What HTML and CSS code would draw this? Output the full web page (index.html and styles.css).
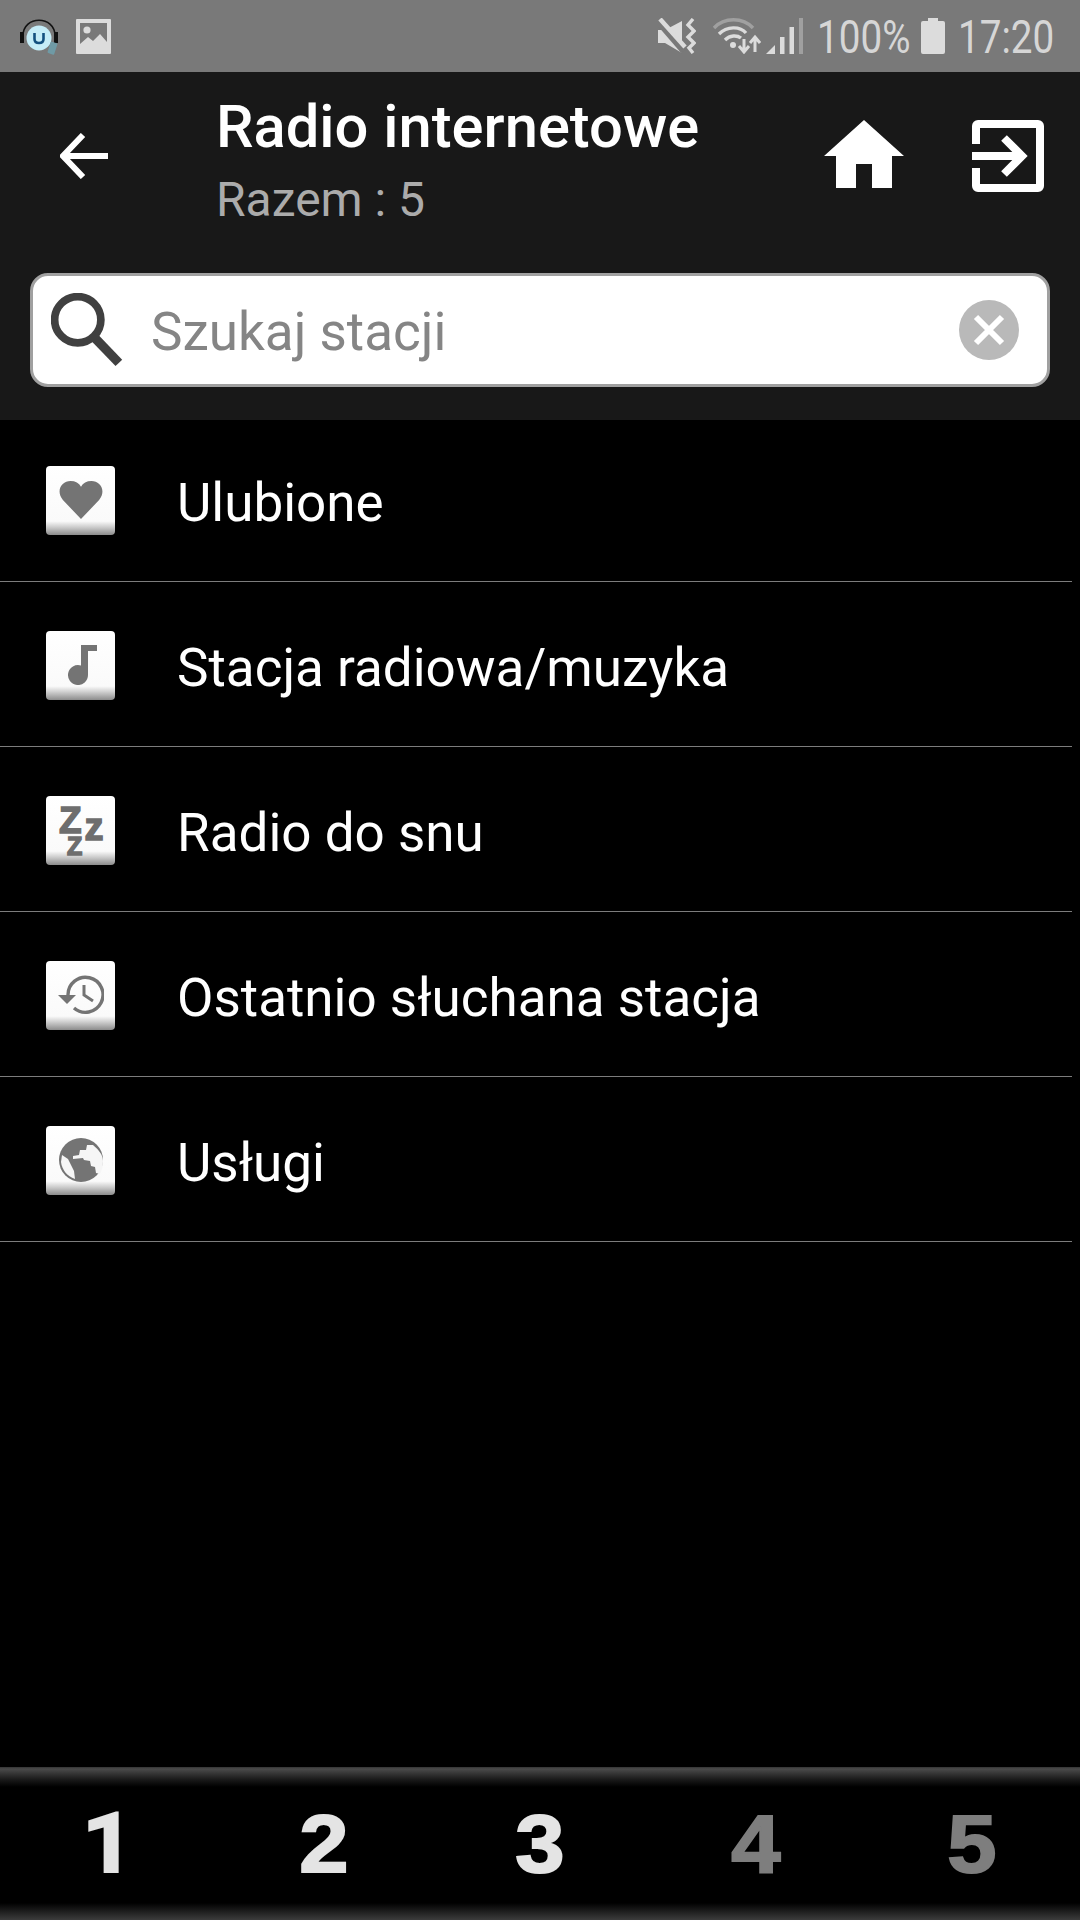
FILE: index.html
```html
<!DOCTYPE html>
<html lang="en">
<head>
    <meta charset="UTF-8">
    <meta name="viewport" content="width=device-width, initial-scale=1.0">
    <link rel="stylesheet" href="styles.css">
    <title>Radio internetowe</title>
</head>
<body>

    <div class="status-bar">
        <svg class="app-icon" width="38" height="38" viewBox="0 0 38 38">
            <path d="M3 19 C3 -2 35 -2 35 19" fill="none" stroke="#111" stroke-width="1.6"/>
            <rect x="0" y="15" width="4" height="11" fill="#111"/>
            <rect x="34" y="15" width="4" height="11" fill="#111"/>
            <circle cx="19" cy="21" r="12.5" fill="#c5ecf7"/>
            <path d="M14.5 16 V22 Q14.5 26 19 26 Q23.5 26 23.5 22 V16" fill="none" stroke="#14507f" stroke-width="2.6"/>
            <rect x="29" y="25" width="7" height="12" rx="1" transform="rotate(18 32 31)" fill="#6f9aa5"/>
        </svg>
        <svg class="image-icon" width="35" height="35" viewBox="0 0 35 35">
            <path fill="#dcdcdc" fill-rule="evenodd" d="M1 0 H34 a1 1 0 0 1 1 1 V34 a1 1 0 0 1 -1 1 H1 a1 1 0 0 1 -1 -1 V1 a1 1 0 0 1 1 -1 Z M4 4 V25 L12 18 L17 22 L24 15 L31 23 V4 Z"/>
            <circle cx="11" cy="11" r="3.6" fill="#dcdcdc"/>
        </svg>
        <div class="status-right">
            <svg class="mute-icon" width="38" height="36" viewBox="0 0 38 36">
                <path fill="#dcdcdc" d="M0 12 H7 L24 3 V35 L7 25 H0 Z"/>
                <path d="M0 3 L26 33" stroke="#797979" stroke-width="7"/>
                <path d="M2 1 L27 29" stroke="#dcdcdc" stroke-width="4.5"/>
                <path d="M35 1 L30 7 L36 13 L30 19 L36 25 L31 30 L35 35" fill="none" stroke="#dcdcdc" stroke-width="3.4"/>
            </svg>
            <svg class="wifi-icon" width="48" height="36" viewBox="0 0 48 36">
                <path d="M1 10 C11 -1 30 -1 40 10" fill="none" stroke="#a0a0a0" stroke-width="3.4"/>
                <path d="M6 16 C14 8 27 8 33 15" fill="none" stroke="#dcdcdc" stroke-width="3.4"/>
                <path d="M12 22 C17 17 24 17 28 20" fill="none" stroke="#dcdcdc" stroke-width="3.4"/>
                <circle cx="20" cy="27" r="3" fill="#dcdcdc"/>
                <path d="M31 21 V33 M26 28 L31 34 L36 28" fill="none" stroke="#dcdcdc" stroke-width="3"/>
                <path d="M42 34 V20 M37 25 L42 19 L47 25" fill="none" stroke="#dcdcdc" stroke-width="3"/>
            </svg>
            <svg class="signal-icon" width="37" height="36" viewBox="0 0 37 36">
                <path fill="#dcdcdc" d="M0 36 L9 27 V36 Z"/>
                <rect x="14" y="19" width="4.5" height="17" fill="#dcdcdc"/>
                <rect x="23.5" y="9" width="4.5" height="27" fill="#dcdcdc"/>
                <rect x="33" y="0" width="4" height="36" fill="#a0a0a0"/>
            </svg>
            <span class="status-text percent">100%</span>
            <svg class="battery-icon" width="24" height="36" viewBox="0 0 24 36">
                <path fill="#dcdcdc" d="M7 0 H17 V3 H22 a2 2 0 0 1 2 2 V34 a2 2 0 0 1 -2 2 H2 a2 2 0 0 1 -2 -2 V5 a2 2 0 0 1 2 -2 H7 Z"/>
            </svg>
            <span class="status-text clock">17:20</span>
        </div>
    </div>

    <div class="header">
        <div class="header-top">
            <svg class="back-icon" width="48" height="46" viewBox="0 0 48 46">
                <path d="M48 23 H4 M23 2 L3 23 L23 44" fill="none" stroke="#fff" stroke-width="6"/>
            </svg>
            <div class="titles">
                <div class="title">Radio internetowe</div>
                <div class="subtitle">Razem : 5</div>
            </div>
            <svg class="home-icon" width="80" height="68" viewBox="0 0 80 68">
                <path fill="#fff" d="M40 0 L80 36 H68 V68 H48 V44 H32 V68 H12 V36 H0 Z"/>
            </svg>
            <svg class="exit-icon" width="72" height="72" viewBox="0 0 72 72">
                <path fill="#fff" fill-rule="evenodd" d="M6 0 H66 a6 6 0 0 1 6 6 V66 a6 6 0 0 1 -6 6 H6 a6 6 0 0 1 -6 -6 V48 H8 V64 H64 V8 H8 V24 H0 V6 a6 6 0 0 1 6 -6 Z"/>
                <path d="M0 36 H46 M32 18 L50 36 L32 54" fill="none" stroke="#fff" stroke-width="8"/>
            </svg>
        </div>
        <div class="search">
            <svg class="search-icon" width="72" height="74" viewBox="0 0 70 72">
                <circle cx="26" cy="26" r="22.5" fill="none" stroke="#404040" stroke-width="7.5"/>
                <path d="M42 43 L66 68" stroke="#404040" stroke-width="9"/>
            </svg>
            <span class="placeholder">Szukaj stacji</span>
            <svg class="clear-icon" width="60" height="60" viewBox="0 0 60 60">
                <circle cx="30" cy="30" r="30" fill="#b9b9b9"/>
                <path d="M17 17 L43 43 M43 17 L17 43" stroke="#fff" stroke-width="6"/>
            </svg>
        </div>
    </div>

    <div class="list">
        <div class="row">
            <div class="tile">
                <svg width="46" height="40" viewBox="0 0 46 42">
                    <path fill="#747474" d="M23 41 L4 21 C-4 11 3 1 12 1 C17 1 21 3 23 7 C25 3 29 1 34 1 C43 1 50 11 42 21 Z"/>
                </svg>
            </div>
            <span class="row-label">Ulubione</span>
        </div>
        <div class="row">
            <div class="tile">
                <svg class="note-icon" width="30" height="40" viewBox="0 0 30 40">
                    <path fill="#747474" d="M14 0 H30 V6 H21 V30 A10 10 0 1 1 14 20.5 Z"/>
                </svg>
            </div>
            <span class="row-label">Stacja radiowa/muzyka</span>
        </div>
        <div class="row">
            <div class="tile">
                <svg class="zzz-icon" width="69" height="69" viewBox="0 0 69 69">
                    <text class="zzz"><tspan x="13" y="37" font-size="37">Z</tspan><tspan x="38.5" y="44" font-size="38">z</tspan><tspan x="21" y="59" font-size="25">Z</tspan></text>
                </svg>
            </div>
            <span class="row-label">Radio do snu</span>
        </div>
        <div class="row">
            <div class="tile">
                <svg width="46" height="40" viewBox="0 0 46 40">
                    <path d="M10 20 A17.5 17.5 0 1 1 16 33" fill="none" stroke="#747474" stroke-width="3.4"/>
                    <path fill="#747474" d="M0 20 H18 L9 29 Z"/>
                    <path d="M26 10 V20 L35 26" fill="none" stroke="#747474" stroke-width="3"/>
                </svg>
            </div>
            <span class="row-label">Ostatnio słuchana stacja</span>
        </div>
        <div class="row">
            <div class="tile">
                <svg width="44" height="44" viewBox="0 0 44 44">
                    <circle cx="22" cy="22" r="22" fill="#747474"/>
                    <path fill="#f6f6f6" d="M14 18 L20 17 L21 12 L27 12 L28 7 L34 7 C40 12 44 17 44 23 C44 28 43 32 41 36 L37 35 L36 29 L32 28 L31 23 L25 22 L24 20 L14 21 Z"/>
                    <path fill="#f6f6f6" d="M3 17 L9 21 L15 33 L16 41 C8 38 3 32 2 24 Z"/>
                </svg>
            </div>
            <span class="row-label">Usługi</span>
        </div>
    </div>

    <div class="pager">
        <span class="page page-one">1</span>
        <span class="page">2</span>
        <span class="page">3</span>
        <span class="page dim">4</span>
        <span class="page dim">5</span>
    </div>

</body>
</html>
```

FILE: styles.css
```css
html, body {
    margin: 0;
    padding: 0;
}

body {
    width: 1080px;
    height: 1920px;
    display: flex;
    flex-direction: column;
    background-color: #000000;
    font-family: 'Roboto', sans-serif;
    overflow: hidden;
}

svg {
    display: block;
    flex-shrink: 0;
}

.status-bar {
    height: 72px;
    flex-shrink: 0;
    display: flex;
    align-items: center;
    padding-left: 20px;
    background-color: #797979;
}

.image-icon {
    margin-left: 18px;
}

.status-right {
    margin-left: auto;
    display: flex;
    align-items: center;
    padding-right: 25px;
}

.wifi-icon {
    margin-left: 17px;
}

.signal-icon {
    margin-left: 5px;
}

.status-text {
    display: block;
    padding-top: 2px;
    font-size: 46px;
    line-height: 70px;
    color: #d6d6d6;
    white-space: nowrap;
    transform: scaleX(0.84);
    transform-origin: left center;
}

.percent {
    width: 92px;
    margin-left: 14px;
}

.battery-icon {
    margin-left: 12px;
}

.clock {
    width: 97px;
    margin-left: 13px;
}

.header {
    height: 348px;
    flex-shrink: 0;
    background-color: #181818;
}

.header-top {
    height: 168px;
    display: flex;
    align-items: center;
    padding: 0 36px 0 60px;
}

.titles {
    margin-left: 108px;
    padding-top: 14px;
}

.title {
    font-size: 59.7px;
    font-weight: 500;
    line-height: 72px;
    color: #ffffff;
}

.subtitle {
    font-size: 48px;
    line-height: 73px;
    color: #ababab;
}

.home-icon {
    margin-left: auto;
    margin-bottom: 4px;
}

.exit-icon {
    margin-left: 68px;
}

.search {
    height: 114px;
    box-sizing: border-box;
    margin: 33px 30px 0;
    padding: 0 28px 0 18px;
    display: flex;
    align-items: center;
    background-color: #ffffff;
    border: 3px solid #a0a0a0;
    border-radius: 18px;
}

.placeholder {
    margin-left: 28px;
    padding-top: 3px;
    font-size: 53px;
    color: #858585;
}

.clear-icon {
    margin-left: auto;
}

.list {
    flex: 1;
}

.row {
    height: 165px;
    box-sizing: border-box;
    margin-right: 8px;
    padding: 3px 0 0 46px;
    display: flex;
    align-items: center;
    border-bottom: 1px solid #7c7c7c;
}

.row:first-child {
    height: 162px;
    padding-top: 0;
}

.tile {
    width: 69px;
    height: 69px;
    display: flex;
    align-items: center;
    justify-content: center;
    padding-bottom: 2px;
    box-sizing: border-box;
    border-radius: 4px;
    background: linear-gradient(to bottom, #ffffff 0, #fafafa 80%, #d0d0d0 88%, #8c8c8c 100%);
}

.note-icon {
    margin-left: 2px;
}

.zzz-icon {
    margin-bottom: -2px;
}

.row-label {
    margin-top: 4px;
    margin-left: 62px;
    font-size: 53px;
    color: #ffffff;
}

.zzz {
    font-family: 'Liberation Sans', sans-serif;
    font-weight: bold;
    fill: #6e6e6e;
    stroke: #6e6e6e;
    stroke-width: 1.5px;
}

.pager {
    height: 153px;
    flex-shrink: 0;
    display: grid;
    grid-template-columns: repeat(5, 1fr);
    align-items: center;
    background: linear-gradient(to bottom, #333333 0, #4a4a4a 2px, #1c1c1c 12px, #000000 20px, #000000 136px, #3c3c3c 100%);
}

.page {
    text-align: center;
    font-family: 'Liberation Sans', sans-serif;
    font-size: 82px;
    font-weight: bold;
    line-height: 1;
    color: #e4e4e4;
    -webkit-text-stroke: 2px #e4e4e4;
    transform: scaleX(1.08);
}

/* the liberation 1 has a foot, the reference one does not */
.page-one {
    font-family: 'Roboto', sans-serif;
    font-size: 84px;
}

.page.dim {
    color: #7e7e7e;
    -webkit-text-stroke-color: #7e7e7e;
}
```
